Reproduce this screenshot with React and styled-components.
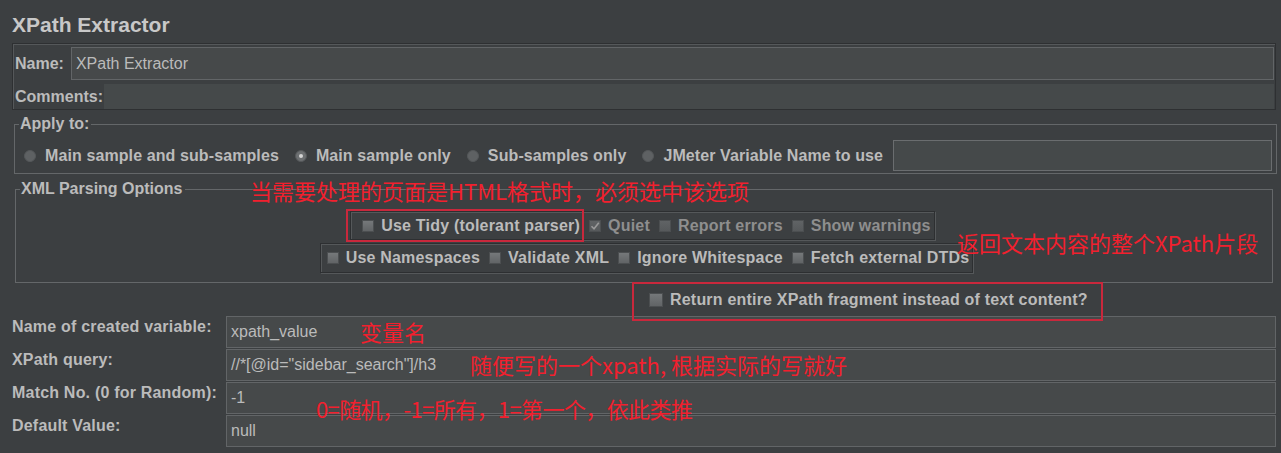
import React from "react";
import styled, { createGlobalStyle } from "styled-components";

const GlobalStyle = createGlobalStyle`
  body {
    margin: 0;
    background: #3c3f41;
    font-family: "Liberation Sans", Arial, sans-serif;
  }
`;

const Page = styled.div`
  position: relative;
  width: 1281px;
  height: 453px;
  overflow: hidden;
  background: #3c3f41;
  color: #bbbbbb;
  box-sizing: border-box;
`;

const Title = styled.h1`
  margin: 0 0 0 12px;
  padding: 13px 0 6px 0;
  font-size: 21px;
  line-height: 24px;
  font-weight: bold;
  color: #c8c8c8;
`;

const NamePanel = styled.div`
  margin: 0 5px 0 12px;
  height: 67px;
  box-sizing: border-box;
  border: 1px solid #2e3032;
  box-shadow: inset 1px 1px 0 #55585a;
  padding: 3px 1px 0 2px;
  display: flex;
  flex-direction: column;
  gap: 4px;
`;

const NameRow = styled.div`
  display: flex;
  align-items: center;
  height: ${(p) => p.$h}px;
  gap: ${(p) => p.$gap}px;
`;

const Label = styled.span`
  font-size: 16px;
  line-height: 18px;
  font-weight: bold;
  color: #bbbbbb;
  white-space: nowrap;
`;

const TextField = styled.div`
  flex: 1;
  align-self: stretch;
  display: flex;
  align-items: center;
  box-sizing: border-box;
  background: ${(p) => (p.$flat ? "#45494a" : "#46494a")};
  border: 1px solid ${(p) => (p.$flat ? "#45494a" : "#626567")};
  padding: 0 0 0 4px;
  font-size: 16px;
  color: #bbbbbb;
  white-space: nowrap;
`;

const Group = styled.fieldset`
  margin: ${(p) => p.$margin};
  padding: ${(p) => p.$padding};
  border: 1px solid #646769;
  min-width: 0;
`;

const Legend = styled.legend`
  margin-left: -5px;
  padding: 0 2px 0 1px;
  font-size: 16px;
  line-height: 18px;
  font-weight: bold;
  color: #bbbbbb;
`;

const RadioRow = styled.div`
  display: flex;
  align-items: center;
  height: 31px;
  gap: 16px;
`;

const Option = styled.label`
  display: flex;
  align-items: center;
  gap: ${(p) => p.$gap || 8}px;
  font-size: 16px;
  letter-spacing: ${(p) => p.$ls ?? 0.2}px;
  font-weight: bold;
  color: ${(p) => (p.$disabled ? "#8e8e8e" : "#bbbbbb")};
  white-space: nowrap;
`;

const Radio = styled.span`
  width: 12px;
  height: 12px;
  border-radius: 50%;
  box-sizing: border-box;
  background: ${(p) => (p.$on ? "#6c6f71" : "#5e6163")};
  border: 1px solid #55585a;
  display: flex;
  align-items: center;
  justify-content: center;
  &::after {
    content: "";
    display: ${(p) => (p.$on ? "block" : "none")};
    width: 4px;
    height: 4px;
    border-radius: 50%;
    background: #d4d4d4;
  }
`;

const Box = styled.span`
  width: ${(p) => p.$size || 12}px;
  height: ${(p) => p.$size || 12}px;
  box-sizing: border-box;
  background: ${(p) =>
    p.$disabled ? "linear-gradient(#606365, #56595b)" : "linear-gradient(#75787a, #616466)"};
  border: 1px solid #4c4f51;
  display: flex;
  align-items: center;
  justify-content: center;
`;

const VarField = styled(TextField)`
  flex: 1;
  height: 31px;
  margin-left: -6px;
  background: #45494a;
  border-color: #6a6d6f;
`;

const XmlRows = styled.div`
  display: flex;
  flex-direction: column;
  align-items: center;
  gap: 3px;
`;

const CheckPanel = styled.div`
  display: flex;
  align-items: center;
  height: ${(p) => p.$h}px;
  box-sizing: border-box;
  padding: 0 3px 0 ${(p) => p.$pl}px;
  gap: 9px;
  border: 1px solid #2d2f31;
  box-shadow: inset 1px 1px 0 #55585a, 1px 1px 0 #55585a;
  margin-left: ${(p) => p.$shift || 0}px;
`;

const ReturnRow = styled.div`
  height: 33px;
  display: flex;
  align-items: center;
  padding-left: 649px;
`;

const FieldGrid = styled.div`
  margin: 0 5px 0 12px;
  display: grid;
  grid-template-columns: 214px 1fr;
  grid-auto-rows: 32px;
  row-gap: 1px;
`;

const GridLabel = styled(Label)`
  padding-top: 2px;
  letter-spacing: 0.2px;
`;

const Note = styled.div`
  position: absolute;
  left: ${(p) => p.$x}px;
  top: ${(p) => p.$y}px;
  font-family: "Noto Sans CJK SC", "Noto Sans", sans-serif;
  font-size: 22px;
  line-height: 28px;
  letter-spacing: ${(p) => p.$ls || 0}px;
  color: #f2202e;
  white-space: nowrap;
  pointer-events: none;
`;

const Mark = styled.div`
  position: absolute;
  left: ${(p) => p.$x}px;
  top: ${(p) => p.$y}px;
  width: ${(p) => p.$w}px;
  height: ${(p) => p.$h}px;
  box-sizing: border-box;
  border: 2px solid #c9283c;
  pointer-events: none;
`;

function Check({ label, checked, disabled, size }) {
  return (
    <Option $disabled={disabled} $gap={7}>
      <Box $disabled={disabled} $size={size}>
        {checked && (
          <svg width="10" height="10" viewBox="0 0 10 10">
            <path d="M1.5 5.2 L4 7.7 L8.8 1.8" fill="none" stroke="#9a9a9a" strokeWidth="1.6" />
          </svg>
        )}
      </Box>
      {label}
    </Option>
  );
}

function RadioOption({ label, on }) {
  return (
    <Option $gap={9} $ls={0.1}>
      <Radio $on={on} />
      {label}
    </Option>
  );
}

export default function App() {
  return (
    <Page>
      <GlobalStyle />
      <Title>XPath Extractor</Title>

      <NamePanel>
        <NameRow $h={33} $gap={7}>
          <Label>Name:</Label>
          <TextField>XPath Extractor</TextField>
        </NameRow>
        <NameRow $h={25} $gap={1}>
          <Label>Comments:</Label>
          <TextField $flat />
        </NameRow>
      </NamePanel>

      <Group $margin="5px 4px 0 14px" $padding="7px 4px 2px 9px">
        <Legend>Apply to:</Legend>
        <RadioRow>
          <RadioOption label="Main sample and sub-samples" />
          <RadioOption label="Main sample only" on />
          <RadioOption label="Sub-samples only" />
          <RadioOption label="JMeter Variable Name to use" />
          <VarField />
        </RadioRow>
      </Group>

      <Group $margin="6px 8px 0 15px" $padding="13px 4px 9px 9px">
        <Legend>XML Parsing Options</Legend>
        <XmlRows>
          <CheckPanel $h={29} $pl={11} $shift={-8}>
            <Check label="Use Tidy (tolerant parser)" />
            <Check label="Quiet" checked disabled />
            <Check label="Report errors" disabled />
            <Check label="Show warnings" disabled />
          </CheckPanel>
          <CheckPanel $h={30} $pl={6}>
            <Check label="Use Namespaces" />
            <Check label="Validate XML" />
            <Check label="Ignore Whitespace" />
            <Check label="Fetch external DTDs" />
          </CheckPanel>
        </XmlRows>
      </Group>

      <ReturnRow>
        <Check label="Return entire XPath fragment instead of text content?" size={14} />
      </ReturnRow>

      <FieldGrid>
        <GridLabel>Name of created variable:</GridLabel>
        <TextField>xpath_value</TextField>
        <GridLabel>XPath query:</GridLabel>
        <TextField>//*[@id="sidebar_search"]/h3</TextField>
        <GridLabel>Match No. (0 for Random):</GridLabel>
        <TextField>-1</TextField>
        <GridLabel>Default Value:</GridLabel>
        <TextField>null</TextField>
      </FieldGrid>

      <Mark $x={346} $y={209} $w={238} $h={33} />
      <Mark $x={632} $y={282} $w={471} $h={39} />

      <Note $x={250} $y={176}>当需要处理的页面是HTML格式时，必须选中该选项</Note>
      <Note $x={957} $y={228}>返回文本内容的整个XPath片段</Note>
      <Note $x={360} $y={317}>变量名</Note>
      <Note $x={470} $y={350}>随便写的一个xpath, 根据实际的写就好</Note>
      <Note $x={316} $y={394} $ls={-0.6}>0=随机，-1=所有，1=第一个，依此类推</Note>
    </Page>
  );
}
